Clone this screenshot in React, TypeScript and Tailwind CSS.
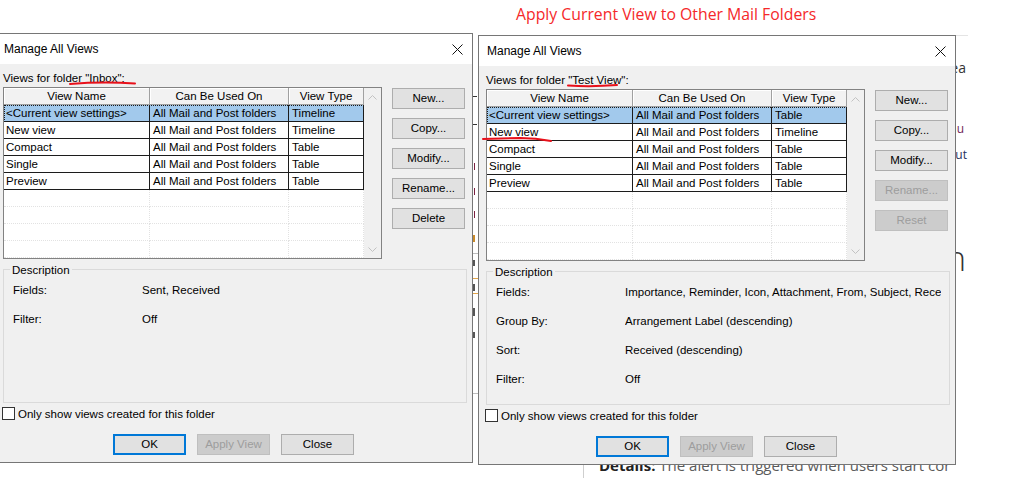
import React from "react";

type DescRow = [string, string];

function CloseX() {
  return (
    <svg width="11" height="11" viewBox="0 0 11 11" className="block">
      <path d="M0.5 0.5 L10.5 10.5 M10.5 0.5 L0.5 10.5" stroke="#111" strokeWidth="1" fill="none" />
    </svg>
  );
}

function Chevron({ up }: { up?: boolean }) {
  return (
    <svg width="9" height="5" viewBox="0 0 9 5" className="block">
      <path d={up ? "M0.5 4.5 L4.5 0.5 L8.5 4.5" : "M0.5 0.5 L4.5 4.5 L8.5 0.5"} stroke="#c2c2c2" strokeWidth="1" fill="none" />
    </svg>
  );
}

function WinButton({ label, disabled, primary }: { label: string; disabled?: boolean; primary?: boolean }) {
  if (disabled) {
    return (
      <div className="w-[73px] h-[21px] flex items-center justify-center bg-[#cccccc] border border-[#bfbfbf] text-[#9d9d9d]">
        {label}
      </div>
    );
  }
  if (primary) {
    return (
      <div className="w-[73px] h-[21px] flex items-center justify-center bg-[#e1e1e1] border-2 border-[#0078d7] text-black">
        {label}
      </div>
    );
  }
  return (
    <div className="w-[73px] h-[21px] flex items-center justify-center bg-[#e1e1e1] border border-[#adadad] text-black">
      {label}
    </div>
  );
}

function ViewTable({ rows }: { rows: string[][] }) {
  return (
    <div className="w-[379px] h-[172px] border border-[#828282] bg-white flex overflow-hidden">
      <div className="w-[360px] flex flex-col">
        <div className="flex h-[17px] shrink-0">
          <div className="w-[146px] h-full border-r border-b border-[#a0a0a0] bg-[#f2f2f2] shadow-[inset_1px_1px_0_#ffffff] flex items-center justify-center pt-[1px]">
            View Name
          </div>
          <div className="w-[139px] h-full border-r border-b border-[#a0a0a0] bg-[#f2f2f2] shadow-[inset_1px_1px_0_#ffffff] flex items-center justify-center pt-[1px]">
            Can Be Used On
          </div>
          <div className="w-[75px] h-full border-r border-b border-[#a0a0a0] bg-[#f2f2f2] shadow-[inset_1px_1px_0_#ffffff] flex items-center justify-center pt-[1px]">
            View Type
          </div>
        </div>
        {rows.map((r, i) => (
          <div
            key={i}
            className={
              i === 0
                ? "flex h-[17px] shrink-0 bg-[#a2c9ec] [outline:1px_dotted_#1a1a1a] [outline-offset:-1px]"
                : "flex h-[17px] shrink-0 bg-white"
            }
          >
            <div className="w-[146px] h-full border-r border-b border-[#1c1c1c] pl-[2px] pt-[1px] flex items-center whitespace-nowrap overflow-hidden">
              {r[0]}
            </div>
            <div className="w-[139px] h-full border-r border-b border-[#1c1c1c] pl-[3px] pt-[1px] flex items-center whitespace-nowrap overflow-hidden">
              {r[1]}
            </div>
            <div className="w-[75px] h-full border-r border-b border-[#1c1c1c] pl-[3px] pt-[1px] flex items-center whitespace-nowrap overflow-hidden">
              {r[2]}
            </div>
          </div>
        ))}
        {[0, 1, 2, 3].map((i) => (
          <div key={"e" + i} className="flex h-[17px] shrink-0">
            <div className="w-[146px] h-full border-r border-b border-dotted border-[#e2e2e2]" />
            <div className="w-[139px] h-full border-r border-b border-dotted border-[#e2e2e2]" />
            <div className="w-[75px] h-full border-r border-b border-dotted border-[#e2e2e2]" />
          </div>
        ))}
      </div>
      <div className="w-[17px] bg-[#f0f0f0] flex flex-col items-center justify-between pt-[7px] pb-[6px]">
        <Chevron up />
        <Chevron />
      </div>
    </div>
  );
}

function Dialog({
  pos,
  folder,
  rows,
  buttons,
  desc,
}: {
  pos: string;
  folder: string;
  rows: string[][];
  buttons: { label: string; disabled?: boolean }[];
  desc: DescRow[];
}) {
  return (
    <div className={pos + " absolute w-[478px] h-[430px] border border-[#767676] flex flex-col z-10"}>
      <div className="h-[30px] shrink-0 bg-white flex items-center justify-between pl-[8px] pr-[9px]">
        <span className="text-[12px] leading-[16px]">Manage All Views</span>
        <CloseX />
      </div>
      <div className="flex-1 bg-[#f0f0f0] pl-[7px] pt-[6px] flex flex-col">
        <div className="flex">
          <div className="flex flex-col">
            <div className="h-[16px] leading-[16px] mb-[1px] whitespace-nowrap">Views for folder "{folder}":</div>
            <ViewTable rows={rows} />
          </div>
          <div className="ml-[10px] pt-[18px] flex flex-col gap-[9px]">
            {buttons.map((b) => (
              <WinButton key={b.label} label={b.label} disabled={b.disabled} />
            ))}
          </div>
        </div>
        <div className="relative w-[464px] h-[134px] border border-[#dadada] mt-[10px]">
          <span className="absolute top-[-7px] left-[6px] px-[2px] bg-[#f0f0f0] leading-[14px]">Description</span>
          <div className="pt-[12px] pl-[9px] flex flex-col gap-[13px]">
            {desc.map((d) => (
              <div key={d[0]} className="flex h-[16px] leading-[16px]">
                <div className="w-[129px]">{d[0]}</div>
                <div className="w-[316px] whitespace-nowrap overflow-hidden">{d[1]}</div>
              </div>
            ))}
          </div>
        </div>
        <div className="flex items-center h-[13px] mt-[4px] ml-[-1px]">
          <div className="w-[13px] h-[13px] border border-[#333333] bg-white" />
          <span className="ml-[3px] leading-[16px] whitespace-nowrap">Only show views created for this folder</span>
        </div>
        <div className="flex gap-[11px] mt-[14px] ml-[110px]">
          <WinButton label="OK" primary />
          <WinButton label="Apply View" disabled />
          <WinButton label="Close" />
        </div>
      </div>
    </div>
  );
}

export default function App() {
  const leftRows = [
    ["<Current view settings>", "All Mail and Post folders", "Timeline"],
    ["New view", "All Mail and Post folders", "Timeline"],
    ["Compact", "All Mail and Post folders", "Table"],
    ["Single", "All Mail and Post folders", "Table"],
    ["Preview", "All Mail and Post folders", "Table"],
  ];
  const rightRows = [
    ["<Current view settings>", "All Mail and Post folders", "Table"],
    ["New view", "All Mail and Post folders", "Timeline"],
    ["Compact", "All Mail and Post folders", "Table"],
    ["Single", "All Mail and Post folders", "Table"],
    ["Preview", "All Mail and Post folders", "Table"],
  ];
  return (
    <div className="relative w-[1016px] h-[487px] bg-white overflow-hidden text-[11.5px] text-black [font-family:'Liberation_Sans',Arial,sans-serif]">
      {/* background article fragments */}
      <div className="absolute left-[516px] top-[3px] text-[15.8px] leading-[22px] text-[#f5282a] whitespace-nowrap [font-family:'Open_Sans',sans-serif]">
        Apply Current View to Other Mail Folders
      </div>
      <div className="absolute right-[50px] top-[58px] text-[14px] leading-[20px] text-[#333333] whitespace-nowrap [font-family:'Open_Sans',sans-serif]">
        the area
      </div>
      <div className="absolute right-[52px] top-[121px] text-[12px] leading-[16px] text-[#6e2357] whitespace-nowrap [font-family:'Open_Sans',sans-serif]">
        menu
      </div>
      <div className="absolute right-[49px] top-[147px] text-[12px] leading-[16px] text-[#1f3160] whitespace-nowrap [font-family:'Open_Sans',sans-serif]">
        about
      </div>
      <div className="absolute right-[50px] top-[238px] text-[34px] leading-[40px] font-light text-[#333333] whitespace-nowrap [font-family:'Open_Sans',sans-serif]">
        Definition
      </div>
      <div className="absolute left-[583px] top-[440px] w-[1px] h-[38px] bg-[#cfcfcf]" />
      <div className="absolute left-[599px] top-[455px] text-[15px] leading-[20px] text-[#5a5a5a] whitespace-nowrap [font-family:'Open_Sans',sans-serif]">
        <span className="font-bold text-[#222222]">Details:</span> The alert is triggered when users start cor
      </div>
      <div className="absolute left-[955px] top-[35px] w-[13px] h-[1px] bg-[#e4e4e4]" />
      {/* strip between the dialogs */}
      <div className="absolute left-[473px] top-[96px] w-[4px] h-[1px] bg-[#333333]" />
      <div className="absolute left-[473px] top-[124px] w-[4px] h-[1px] bg-[#333333]" />
      <div className="absolute left-[474px] top-[163px] w-[1px] h-[7px] bg-[#7a2040]" />
      <div className="absolute left-[474px] top-[188px] w-[1px] h-[7px] bg-[#7a2040]" />
      <div className="absolute left-[474px] top-[211px] w-[1px] h-[7px] bg-[#7a2040]" />
      <div className="absolute left-[473px] top-[235px] w-[2px] h-[7px] bg-[#c98a2a]" />
      <div className="absolute left-[472px] top-[253px] w-[6px] h-[1px] bg-[#bdbdbd]" />
      <div className="absolute left-[473px] top-[260px] w-[2px] h-[6px] bg-[#555555]" />
      <div className="absolute left-[473px] top-[278px] w-[5px] h-[1px] bg-[#e2a54a]" />
      <div className="absolute left-[473px] top-[284px] w-[2px] h-[7px] bg-[#555555]" />
      <div className="absolute left-[473px] top-[293px] w-[5px] h-[1px] bg-[#e2a54a]" />
      <div className="absolute left-[473px] top-[308px] w-[2px] h-[8px] bg-[#555555]" />
      <div className="absolute left-[473px] top-[332px] w-[2px] h-[6px] bg-[#555555]" />
      <div className="absolute left-[472px] top-[393px] w-[6px] h-[1px] bg-[#bdbdbd]" />

      <Dialog
        pos="left-[-5px] top-[33px]"
        folder="Inbox"
        rows={leftRows}
        buttons={[
          { label: "New..." },
          { label: "Copy..." },
          { label: "Modify..." },
          { label: "Rename..." },
          { label: "Delete" },
        ]}
        desc={[
          ["Fields:", "Sent, Received"],
          ["Filter:", "Off"],
        ]}
      />
      <Dialog
        pos="left-[478px] top-[35px]"
        folder="Test View"
        rows={rightRows}
        buttons={[
          { label: "New..." },
          { label: "Copy..." },
          { label: "Modify..." },
          { label: "Rename...", disabled: true },
          { label: "Reset", disabled: true },
        ]}
        desc={[
          ["Fields:", "Importance, Reminder, Icon, Attachment, From, Subject, Received, Size, Categories"],
          ["Group By:", "Arrangement Label (descending)"],
          ["Sort:", "Received (descending)"],
          ["Filter:", "Off"],
        ]}
      />

      <svg className="absolute left-0 top-0 z-20 pointer-events-none" width="1016" height="487" viewBox="0 0 1016 487">
        <path d="M70 84 Q102 81.5 135 83.5" stroke="#e8101a" strokeWidth="2" fill="none" strokeLinecap="round" />
        <path d="M568 85.5 Q592 87 617 85" stroke="#e8101a" strokeWidth="2" fill="none" strokeLinecap="round" />
        <path d="M483 139 L520 138 Q536 138 551 141" stroke="#e8101a" strokeWidth="2" fill="none" strokeLinecap="round" />
      </svg>
    </div>
  );
}
